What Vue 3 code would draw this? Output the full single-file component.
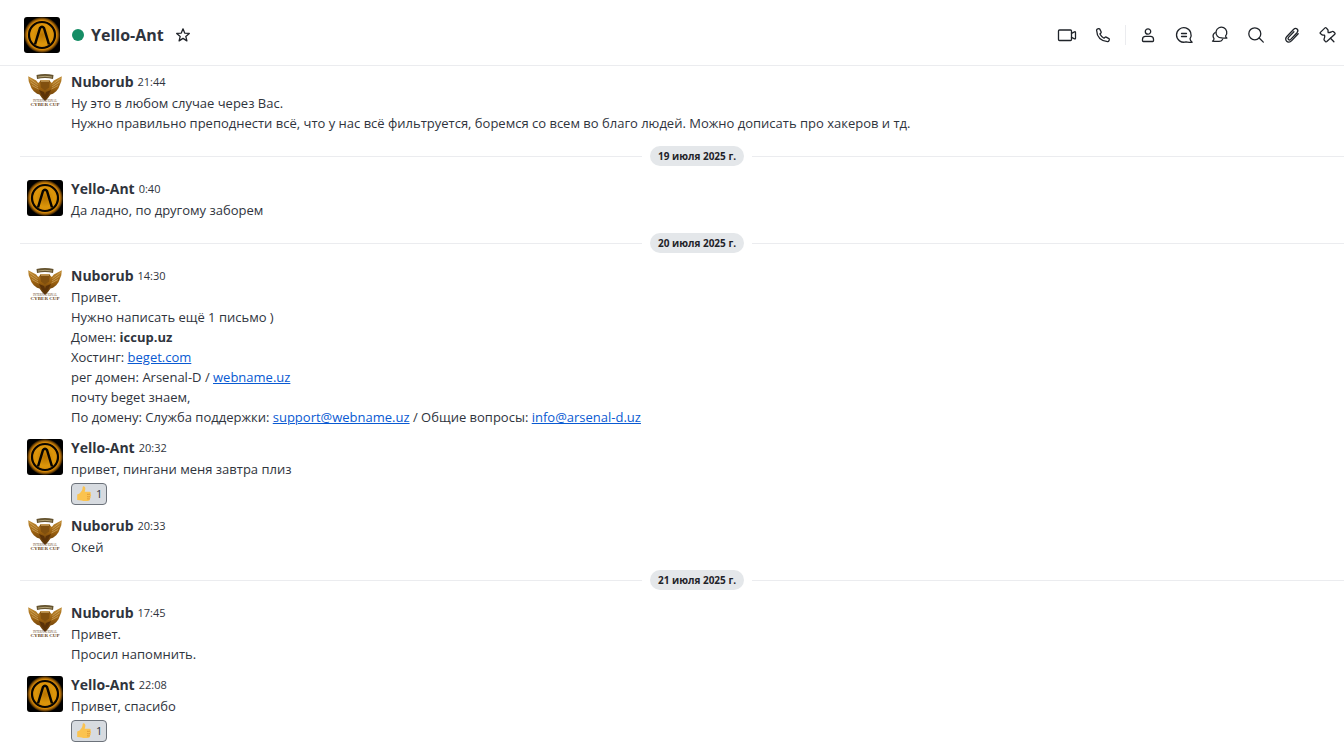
<template>
  <div class="room">
    <header class="room-header">
      <svg class="avatar" viewBox="0 0 36 36" role="img" aria-label="Yello-Ant">
        <use href="#avatar-ant" />
      </svg>
      <span class="status"></span>
      <h1 class="room-name">Yello-Ant</h1>
      <button class="favorite" type="button" aria-label="Избранное">
        <svg viewBox="0 0 16 16">
          <path d="M8 1.800l1.700 4.300 4.600.3-3.500 3 1.100 4.500L8 11.400l-3.900 2.500 1.100-4.500-3.500-3 4.600-.3z" />
        </svg>
      </button>
      <nav class="toolbar">
        <template v-for="action in actions" :key="action.label">
          <span v-if="action.divider" class="divider"></span>
          <button v-else class="tool" type="button" :aria-label="action.label">
            <svg viewBox="0 0 20 20">
              <path v-for="d in action.paths" :key="d" :d="d" />
            </svg>
          </button>
        </template>
      </nav>
    </header>

    <main class="messages">
      <template v-for="item in items" :key="item.id">
        <div v-if="item.date" class="day">
          <span class="day-label">{{ item.date }}</span>
        </div>
        <article v-else class="message">
          <svg class="avatar" viewBox="0 0 36 36" role="img" :aria-label="item.user">
            <use :href="item.user === 'Nuborub' ? '#avatar-cup' : '#avatar-ant'" />
          </svg>
          <div class="content">
            <div class="meta">
              <span class="user">{{ item.user }}</span>
              <time class="time">{{ item.time }}</time>
            </div>
            <p v-for="(line, i) in item.lines" :key="i" class="line">
              <template v-for="(part, j) in line" :key="j">
                <template v-if="typeof part === 'string'">{{ part }}</template>
                <a v-else-if="part.href" :href="part.href">{{ part.text }}</a>
                <strong v-else>{{ part.text }}</strong>
              </template>
            </p>
            <button v-if="item.likes" class="reaction" type="button" aria-label="Нравится">
              <svg viewBox="0 0 16 16">
                <path class="thumb" d="M1.200 8.600c1.900-.5 3-1.600 4-3.100.9-1.300 1.300-2.200 1.400-3.800C6.700.6 7.500.1 8.300.5c1.400.7 1.300 2.900.4 5.300h4.700c1.500 0 1.900 1.700.8 2.300 1.300.5 1.100 2.200 0 2.500.8.7.6 1.900-.4 2.200.5.9-.1 1.900-1.100 2-2.400.4-5.200.4-7.200-.3-1.200-.4-2.600-.6-4.300-.6z" />
                <path class="fingers" d="M14.200 8.100c-.8.300-2 .3-3.200.2M14.200 10.600c-.8.300-2 .3-3.200.1M13.800 12.800c-.8.200-1.800.2-2.800 0" />
              </svg>
              <span>{{ item.likes }}</span>
            </button>
          </div>
        </article>
      </template>
    </main>

    <svg class="sprites" aria-hidden="true">
      <defs>
        <radialGradient id="ant-glow">
          <stop offset="0" stop-color="#b87400" />
          <stop offset="0.5" stop-color="#dc960a" />
          <stop offset="0.8" stop-color="#d88a08" />
          <stop offset="0.88" stop-color="#a06206" />
          <stop offset="1" stop-color="#140b00" />
        </radialGradient>
        <linearGradient id="cup-gold" x1="0" y1="0" x2="0" y2="1">
          <stop offset="0" stop-color="#c08c34" />
          <stop offset="0.5" stop-color="#9a6010" />
          <stop offset="1" stop-color="#4f2d08" />
        </linearGradient>
        <symbol id="avatar-ant" viewBox="0 0 36 36">
          <rect width="36" height="36" rx="3" fill="#000000" />
          <circle cx="18" cy="18" r="18" fill="url(#ant-glow)" />
          <circle cx="18" cy="18" r="13" fill="none" stroke="#090500" stroke-width="2.200" />
          <path d="M11 27.500l5-16.500q2-2.600 4 0l5 16.500" fill="none" stroke="#090500" stroke-width="2.500" stroke-linejoin="round" />
        </symbol>
        <symbol id="avatar-cup" viewBox="0 0 36 36">
          <path d="M1.200 3.200l8 4.300 2 2.500 3-3h7.600l3 3 2-2.500 8-4.300-.5 5-1.500 3.800-1.300 3.200-2.300 3-3.200 2.500-2.500.8-2.500 3.500-3 3-3-3-2.500-3.500-2.500-.8-3.200-2.500-2.300-3-1.300-3.200-1.500-3.800z" fill="url(#cup-gold)" />
          <path d="M2.500 5.500l8 6M3.500 9l7.500 5M5 12.500l6.500 3.500M33.500 5.500l-8 6M32.500 9l-7.500 5M31 12.500l-6.500 3.500" fill="none" stroke="#f4d9a0" stroke-width="0.400" />
          <path d="M10 6l-.5-4q8.500-1.800 17 0l-.5 4q-8-1.800-16 0z" fill="#65532f" />
          <path d="M11 4q7-1.400 14 0" fill="none" stroke="#d8c99a" stroke-width="0.700" />
          <path d="M13 7.500h10l-.8 7-4.200 3-4.200-3z" fill="#81500f" />
          <path d="M14 8h8" stroke="#f0d090" stroke-width="0.900" />
          <path d="M12 17l5 2 1 3 1-3 5-2-2.500 5-3.500 4-3.500-4z" fill="#5b3208" />
          <text x="18" y="29" class="cup-small">INTERNATIONAL</text>
          <text x="18" y="33" class="cup-title">CYBER CUP</text>
        </symbol>
      </defs>
    </svg>
  </div>
</template>

<script setup>
const link = (text, href = `https://${text}`) => ({ text, href })

const actions = [
  {
    label: 'Видеозвонок',
    paths: ['M2.500 5h11q1 0 1 1v8.500q0 1-1 1h-11q-1 0-1-1V6q0-1 1-1z', 'M14.500 8.300l3-1.500q1-.4 1 .6v5.800q0 1-1 .6l-3-1.500']
  },
  {
    label: 'Звонок',
    paths: ['M4.200 4.200L5.600 3.600q.8-.2 1.200.5L8.100 6.800q.3.700-.2 1.200L6.900 9q1.500 2.800 4.100 4.200l1.100-1q.5-.4 1.100-.1l2.700 1.500q.6.4.4 1.100l-.5 1.400q-.3.700-1.200.6Q4.100 15.400 3.600 5.200q0-.7.6-1z']
  },
  { label: 'divider', divider: true },
  {
    label: 'Профиль',
    paths: ['M10 3.800a2.700 2.700 0 1 1 0 5.400a2.700 2.700 0 1 1 0-5.400z', 'M7.500 11.300h5q3 0 3 3v1.400q0 .8-.8.8H5.300q-.8 0-.8-.8v-1.400q0-3 3-3z']
  },
  {
    label: 'Треды',
    paths: ['M16 13.800a7.300 7.300 0 1 0-4 3.100c1.600.6 3.800.4 6.200.3-1.400-.9-2.100-1.900-2.200-3.400z', 'M7.500 8.500h5M7.500 11.500h5']
  },
  {
    label: 'Обсуждения',
    paths: ['M15.600 10.900a5.400 5.400 0 1 0-3.900 2c1.600.3 3.100.2 5.200.1-1-.5-1.400-1.100-1.300-2.100z', 'M5.200 7.500C2.900 9 2.700 11.500 4 13.600c.1 1.200-.5 1.900-1.500 2.600 2 .3 3.600.4 5.200.1 2.100.4 3.900-.2 4.900-1.800']
  },
  {
    label: 'Поиск',
    paths: ['M8.800 2.800a6 6 0 1 1 0 12a6 6 0 1 1 0-12z', 'M13.200 13l4.100 4.100']
  },
  {
    label: 'Файлы',
    paths: ['M16.200 8.700l-6.500 6.900c-3.800 3.900-8-.7-4.600-4.300l6.400-6.800c2.600-2.600 5.800.4 3.500 3.200l-6.300 6.700c-1.500 1.500-3.600-.3-2.200-2l5.400-5.700']
  },
  {
    label: 'Закреплённые',
    paths: ['M2.400 7.400L7 2.900q.6-.6 1.200 0l1.600 1.800q.5.700.2 1.400l.2 1.600c1.500.2 3-.8 4-1.200q.8-.3 1.400.3l1.200 1.200q.6.6 0 1.200L8.800 16.600q-.7.6-1.300 0l-1.200-1.300q-.5-.6-.2-1.300c.5-1.200 1-2.600.5-3.800l-1.800-.1q-.7-.1-1.200-.6l-1.200-.9q-.6-.6 0-1.200z', 'M12.500 13.200l3.400 3.600']
  }
]

const items = [
  {
    id: 1,
    user: 'Nuborub',
    time: '21:44',
    lines: [
      ['Ну это в любом случае через Вас.'],
      ['Нужно правильно преподнести всё, что у нас всё фильтруется, боремся со всем во благо людей. Можно дописать про хакеров и тд.']
    ]
  },
  { id: 2, date: '19 июля 2025 г.' },
  { id: 3, user: 'Yello-Ant', time: '0:40', lines: [['Да ладно, по другому заборем']] },
  { id: 4, date: '20 июля 2025 г.' },
  {
    id: 5,
    user: 'Nuborub',
    time: '14:30',
    lines: [
      ['Привет.'],
      ['Нужно написать ещё 1 письмо )'],
      ['Домен: ', { text: 'iccup.uz' }],
      ['Хостинг: ', link('beget.com')],
      ['рег домен: Arsenal-D / ', link('webname.uz')],
      ['почту beget знаем,'],
      [
        'По домену: Служба поддержки: ',
        link('support@webname.uz', 'mailto:support@webname.uz'),
        ' / Общие вопросы: ',
        link('info@arsenal-d.uz', 'mailto:info@arsenal-d.uz')
      ]
    ]
  },
  { id: 6, user: 'Yello-Ant', time: '20:32', lines: [['привет, пингани меня завтра плиз']], likes: 1 },
  { id: 7, user: 'Nuborub', time: '20:33', lines: [['Окей']] },
  { id: 8, date: '21 июля 2025 г.' },
  { id: 9, user: 'Nuborub', time: '17:45', lines: [['Привет.'], ['Просил напомнить.']] },
  { id: 10, user: 'Yello-Ant', time: '22:08', lines: [['Привет, спасибо']], likes: 1 }
]
</script>

<style>
body {
  margin: 0;
  background: #ffffff;
}
</style>

<style scoped>
.room {
  min-height: 100vh;
  overflow: hidden;
  box-sizing: border-box;
  color: #2f343d;
  font-family: 'Open Sans', 'Noto Sans', sans-serif;
  font-size: 13px;
  line-height: 20px;
}

button {
  padding: 0;
  border: 0;
  background: none;
  color: inherit;
  font: inherit;
  cursor: pointer;
}

.room-header {
  display: flex;
  align-items: center;
  padding: 17px 2px 12px 24px;
  border-bottom: 1px solid #ebecef;
}

.avatar {
  flex: none;
  width: 36px;
  height: 36px;
}

.status {
  width: 12px;
  height: 12px;
  margin: 0 7px 0 12px;
  border-radius: 50%;
  background: #158d65;
}

.room-name {
  margin: 0;
  font-size: 16px;
  line-height: 24px;
  font-weight: 700;
}

.favorite {
  display: flex;
  margin-left: 11px;
}

.favorite svg {
  width: 16px;
  height: 16px;
}

.favorite path,
.tool path {
  fill: none;
  stroke: #1f2329;
  stroke-width: 1.3;
  stroke-linecap: round;
  stroke-linejoin: round;
}

.toolbar {
  display: flex;
  align-items: center;
  gap: 8px;
  margin-left: auto;
}

.tool {
  display: flex;
  align-items: center;
  justify-content: center;
  width: 28px;
  height: 28px;
}

.tool svg {
  width: 20px;
  height: 20px;
}

.divider {
  width: 1px;
  height: 20px;
  background: #ebecef;
}

.message {
  display: flex;
  gap: 8px;
  padding: 6px 20px 5px 27px;
}

.message .avatar {
  margin-top: 1px;
}

.content {
  min-width: 0;
}

.meta {
  display: flex;
  gap: 4px;
  margin-bottom: 1px;
}

.user {
  font-size: 14px;
  font-weight: 700;
}

.time {
  font-size: 11px;
}

.line {
  margin: 0;
}

a {
  color: #095ad2;
  text-decoration: underline;
}

.reaction {
  display: flex;
  align-items: center;
  gap: 4px;
  box-sizing: border-box;
  height: 22px;
  margin-top: 4px;
  padding: 0 4px;
  border: 1px solid #6c727a;
  border-radius: 4px;
  background: #d7dbe0;
  font-size: 11px;
}

.reaction svg {
  width: 16px;
  height: 16px;
}

.thumb {
  fill: #fbc34f;
}

.fingers {
  fill: none;
  stroke: #d9912e;
  stroke-width: 0.8;
}

/* The rule runs on past the right edge of the list */
.day {
  display: flex;
  align-items: center;
  gap: 8px;
  margin: 8px -30px 7px 20px;
}

.day::before,
.day::after {
  content: '';
  flex: 1;
  height: 1px;
  background: #ebecef;
}

.day-label {
  padding: 0 8px;
  border-radius: 10px;
  background: #e4e7ea;
  color: #1f2329;
  font-size: 10px;
  font-weight: 700;
}

.sprites {
  position: absolute;
  width: 0;
  height: 0;
}

.cup-small,
.cup-title {
  fill: #6b4a26;
  font-family: 'Liberation Serif', serif;
  text-anchor: middle;
}

.cup-small {
  font-size: 3px;
}

.cup-title {
  font-size: 5px;
  font-weight: 700;
}
</style>
